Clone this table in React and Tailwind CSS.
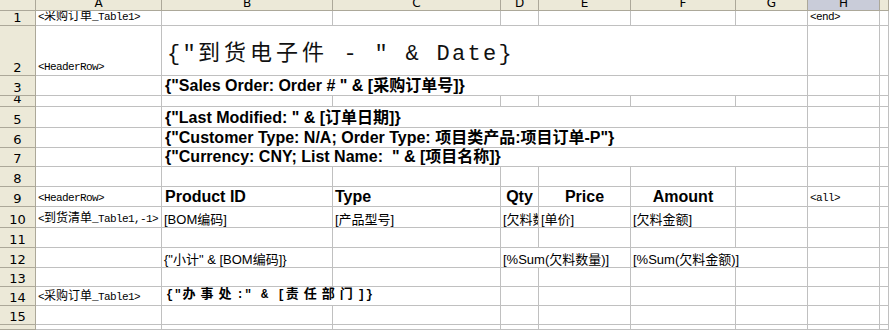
import React from "react";
import clsx from "clsx";

const spanCls = {
  1: "col-span-1",
  2: "col-span-2",
  6: "col-span-6",
};

const letters = ["A", "B", "C", "D", "E", "F", "G", "H", ""];

// small SimSun-like tags
const Tag = ({ children }) => (
  <span className="font-['Liberation_Mono','Noto_Sans_CJK_SC',monospace] text-[11px] tracking-[-0.6px] leading-[14px] pb-[1px] pl-[2px]">
    {children}
  </span>
);
const Cj = ({ children }) => (
  <span className="font-['Noto_Sans_CJK_SC',sans-serif] text-[12px] tracking-normal">{children}</span>
);

const Bold = ({ children }) => (
  <span className="font-['Liberation_Sans','Noto_Sans_CJK_SC',sans-serif] font-bold text-[16px] leading-[18px] pl-[3px] whitespace-pre">
    {children}
  </span>
);

const Reg = ({ children }) => (
  <span className="font-['Liberation_Sans','Noto_Sans_CJK_SC',sans-serif] text-[13px] leading-[15px] pl-[2px] whitespace-pre">
    {children}
  </span>
);

const b = (n) => Array.from({ length: n }, () => ({}));

const rows = [
  { n: 1, cells: [{ c: <Tag>&lt;<Cj>采购订单</Cj>_Table1&gt;</Tag> }, ...b(6), { c: <Tag>&lt;end&gt;</Tag> }, {}] },
  {
    n: 2,
    cells: [
      { c: <Tag>&lt;HeaderRow&gt;</Tag> },
      {
        span: 6,
        c: (
          <span className="pl-[5px] pb-[7px] whitespace-pre leading-[26px] text-[#111]">
            <span className="font-['Liberation_Mono',monospace] text-[22px] tracking-[2.3px]">{'{"'}</span>
            <span className="font-['Noto_Sans_CJK_SC',sans-serif] text-[22px] tracking-[4px]">到货电子件</span>
            <span className="font-['Liberation_Mono',monospace] text-[22px] tracking-[2.3px]">{' - " & Date}'}</span>
          </span>
        ),
      },
      {},
      {},
    ],
  },
  { n: 3, cells: [{}, { span: 6, c: <Bold>{'{"Sales Order: Order # " & [采购订单号]}'}</Bold> }, {}, {}] },
  { n: 4, cells: b(9) },
  { n: 5, cells: [{}, { span: 6, c: <Bold>{'{"Last Modified: " & [订单日期]}'}</Bold> }, {}, {}] },
  { n: 6, cells: [{}, { span: 6, c: <Bold>{'{"Customer Type: N/A; Order Type: 项目类产品:项目订单-P"}'}</Bold> }, {}, {}] },
  { n: 7, cells: [{}, { span: 6, c: <Bold>{'{"Currency: CNY; List Name:  " & [项目名称]}'}</Bold> }, {}, {}] },
  { n: 8, cells: b(9) },
  {
    n: 9,
    cells: [
      { c: <Tag>&lt;HeaderRow&gt;</Tag> },
      { c: <Bold>Product ID</Bold> },
      { c: <span className="font-['Liberation_Sans',sans-serif] font-bold text-[16px] leading-[18px] pl-[2px]">Type</span> },
      { cls: "justify-center", c: <span className="font-['Liberation_Sans',sans-serif] font-bold text-[16px] leading-[18px]">Qty</span> },
      { cls: "justify-center", c: <span className="font-['Liberation_Sans',sans-serif] font-bold text-[16px] leading-[18px]">Price</span> },
      { cls: "justify-center", c: <span className="font-['Liberation_Sans',sans-serif] font-bold text-[16px] leading-[18px]">Amount</span> },
      {},
      { c: <Tag>&lt;all&gt;</Tag> },
      {},
    ],
  },
  {
    n: 10,
    cells: [
      { c: <Tag>&lt;<Cj>到货清单</Cj>_Table1,-1&gt;</Tag> },
      { c: <Reg>[BOM编码]</Reg> },
      { c: <Reg>[产品型号]</Reg> },
      { c: <Reg>[欠料数量]</Reg> },
      { c: <Reg>[单价]</Reg> },
      { c: <Reg>[欠料金额]</Reg> },
      {},
      {},
      {},
    ],
  },
  { n: 11, cells: b(9) },
  {
    n: 12,
    cells: [
      {},
      { c: <Reg>{'{"小计" & [BOM编码]}'}</Reg> },
      {},
      { span: 2, c: <Reg>[%Sum(欠料数量)]</Reg> },
      { span: 2, c: <Reg>[%Sum(欠料金额)]</Reg> },
      {},
      {},
    ],
  },
  { n: 13, cells: b(9) },
  {
    n: 14,
    cells: [
      { c: <Tag>&lt;<Cj>采购订单</Cj>_Table1&gt;</Tag> },
      {
        span: 2,
        c: (
          <span className="pl-[4px] pb-[2px] whitespace-pre leading-[15px] font-bold">
            <span className="font-['Liberation_Mono',monospace] text-[12px] tracking-[1px]">{'{"'}</span>
            <span className="font-['Noto_Sans_CJK_SC',sans-serif] text-[13px] tracking-[5px]">办事处</span>
            <span className="font-['Liberation_Mono',monospace] text-[12px] tracking-[1px]">{':" & ['}</span>
            <span className="font-['Noto_Sans_CJK_SC',sans-serif] text-[13px] tracking-[5px]">责任部门</span>
            <span className="font-['Liberation_Mono',monospace] text-[12px] tracking-[1px]">{']}'}</span>
          </span>
        ),
      },
      ...b(6),
    ],
  },
  { n: 15, cells: b(9) },
  { n: 16, cells: b(9) },
];

export default function App() {
  return (
    <div className="w-[889px] h-[330px] overflow-hidden bg-white text-black">
      <div className="grid h-[330px] grid-cols-[36px_126px_171px_168px_38px_92px_105px_72px_72px_1fr] grid-rows-[11px_15px_50px_20px_11px_21px_20px_19px_20px_20px_21px_20px_20px_19px_19px_19px_1fr]">
        {/* column header */}
        <div className="bg-[#ece9d8] border-r border-b border-[#aca899]" />
        {letters.map((l, i) => (
          <div
            key={"h" + i}
            className={clsx(
              "flex items-end justify-center overflow-hidden border-r border-b border-[#aca899] font-['DejaVu_Sans',sans-serif] text-[12px] leading-[14px]",
              l === "H" ? "bg-[#c9ccd9]" : "bg-[#ece9d8]"
            )}
          >
            {l}
          </div>
        ))}

        {rows.map((row) => (
          <React.Fragment key={row.n}>
            <div
              className={clsx(
                "flex justify-center overflow-hidden bg-[#ece9d8] border-r border-b border-[#aca899] font-['DejaVu_Sans',sans-serif] text-[13px] leading-[15px]",
                row.n === 16 ? "items-start pt-[1px]" : "items-end"
              )}
            >
              {row.n}
            </div>
            {row.cells.map((cell, i) => (
              <div
                key={i}
                className={clsx(
                  "flex items-end overflow-hidden whitespace-nowrap min-w-0 border-r border-b border-[#c0c0c0]",
                  spanCls[cell.span || 1],
                  cell.cls
                )}
              >
                {cell.c}
              </div>
            ))}
          </React.Fragment>
        ))}
      </div>
    </div>
  );
}
